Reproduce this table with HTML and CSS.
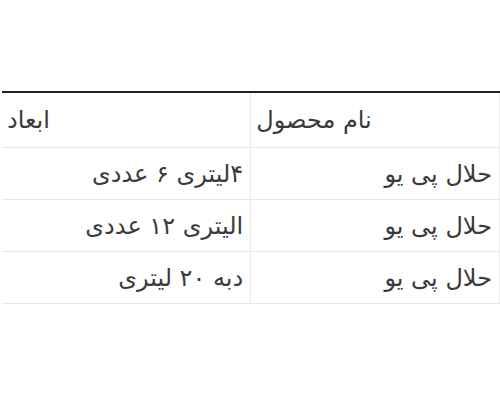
FILE: index.html
```html
<!DOCTYPE html>
<html lang="fa" dir="rtl">
<head>
<meta charset="utf-8">
<link rel="stylesheet" href="styles.css">
</head>
<body>
<div class="page">
<table class="spec">
<thead>
<tr><th>نام محصول</th><th>ابعاد</th></tr>
</thead>
<tbody>
<tr><td>حلال پی یو</td><td>۴لیتری ۶ عددی</td></tr>
<tr><td>حلال پی یو</td><td>الیتری ۱۲ عددی</td></tr>
<tr><td>حلال پی یو</td><td>دبه ۲۰ لیتری</td></tr>
</tbody>
</table>
</div>
</body>
</html>
```
FILE: styles.css
```css
html, body {
  margin: 0;
  padding: 0;
  background: #fff;
}
.page {
  padding-top: 91px;
  width: 498px;
}
.spec {
  width: 100%;
  border-collapse: collapse;
  font-family: "DejaVu Sans", sans-serif;
  color: #3a3a3a;
  font-size: 24px;
  border-top: 2px solid #222;
  border-right: 1px solid #eee;
}
.spec th {
  font-weight: normal;
  text-align: left;
  height: 54px;
  padding: 0 5px;
  border-bottom: 1px solid #e8e8e8;
  border-left: 1px solid #e8e8e8;
  width: 50%;
}
.spec th:last-child, .spec td:last-child {
  border-left: none;
}
.spec td {
  text-align: right;
  height: 51px;
  padding: 0 7px;
  border-bottom: 1px solid #e8e8e8;
  border-left: 1px solid #e8e8e8;
}
```
